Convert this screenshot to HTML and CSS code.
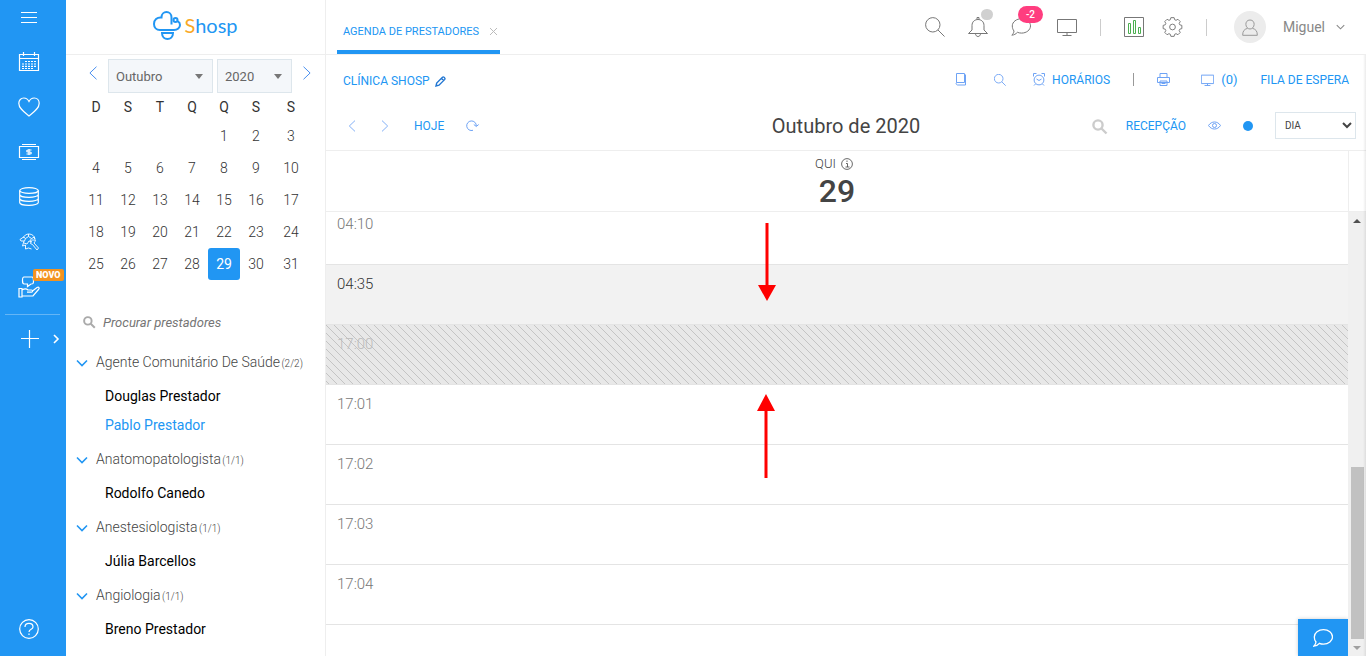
FILE: index.html
```
<!DOCTYPE html>
<html lang="pt-BR">
<head>
  <meta charset="UTF-8">
  <title>Agenda de Prestadores - Shosp</title>
  <link rel="stylesheet" href="styles.css">
</head>
<body>
  <svg class="sprite" aria-hidden="true">
    <symbol id="i-search" viewBox="0 0 20 20"><circle cx="7.800" cy="7.800" r="7.200"/><path d="M13 13l6.500 6.500"/></symbol>
    <symbol id="i-search-bold" viewBox="0 0 16 16"><circle cx="6" cy="6" r="4.600"/><path d="M9.500 9.500l5 5"/></symbol>
    <symbol id="i-monitor" viewBox="0 0 20 18"><path d="M.5 1.500h19v13H.5zM10 14.500v3M5.500 17.500h9"/></symbol>
    <symbol id="i-chat" viewBox="0 0 20 18"><path d="M10.500.7c5 0 9 3.200 9 7.200s-4 7.200-9 7.200c-1.500 0-2.900-.3-4.100-.8C5 16 3 17 .8 17.200c1.300-1.200 2-2.500 2.200-4.200C1.900 11.700 1.300 9.900 1.300 7.900c0-4 4.200-7.200 9.200-7.200z"/></symbol>
    <symbol id="i-left" viewBox="0 0 8 14"><path d="M7.500.7L.9 7l6.600 6.300"/></symbol>
    <symbol id="i-right" viewBox="0 0 8 14"><path d="M.5.7L7.100 7 .5 13.300"/></symbol>
    <symbol id="i-down" viewBox="0 0 12 8"><path d="M1 1.500l5 5 5-5"/></symbol>
  </svg>

  <div class="app">
    <nav class="sidebar" aria-label="Menu principal">
      <button class="menu" aria-label="Menu"><svg class="icon" width="18" height="12"><path d="M1 1.500h16M1 6.500h16M1 11.500h16"/></svg></button>
      <a href="#" aria-label="Agenda"><svg class="icon" width="22" height="20" viewBox="0 0 22 20"><path d="M1.500 2.500h19v16h-19zM1.500 6.500h19M5.500 0v4M16.500 0v4"/><path stroke-dasharray="2 1" d="M7 9.500h12M4 12h15M4 14.300h15M4 16.500h12"/></svg></a>
      <a href="#" aria-label="Saúde"><svg class="icon" width="22" height="20" viewBox="0 0 22 20"><path d="M11 19C6 15 .8 11.500.8 6.300.8 3.200 3 1 5.800 1 8.200 1 10 2.500 11 4.500 12 2.500 13.800 1 16.200 1 19 1 21.200 3.200 21.200 6.300 21.200 11.500 16 15 11 19z"/></svg></a>
      <a href="#" aria-label="Financeiro"><svg class="icon" width="20" height="16" viewBox="0 0 20 16"><path d="M3 .5h14M3 15.500h14M.5 2.500h19v11H.5z"/><path d="M12.500 6H9c-1.700 0-1.700 2 0 2h2c1.700 0 1.700 2 0 2H7.500M10 5v6"/></svg></a>
      <a href="#" aria-label="Estoque"><svg class="icon" width="20" height="19" viewBox="0 0 20 19"><ellipse cx="10" cy="3.500" rx="9.300" ry="2.900"/><path d="M.7 3.500v12c0 1.600 4.200 2.900 9.300 2.900s9.300-1.300 9.300-2.900v-12M.7 7.500c0 1.600 4.200 2.900 9.300 2.900s9.300-1.300 9.300-2.900M.7 11.500c0 1.600 4.200 2.900 9.300 2.900s9.300-1.300 9.300-2.900"/></svg></a>
      <a href="#" aria-label="Marketing"><svg class="icon fine" width="20" height="18" viewBox="0 0 20 18"><path d="M4.500 5C5 2.500 7 1 10 1s5.500 2 6 5M1 6.500L4.500 4l2 1.500-1 2.500H2zM6.500 5.500l3-2 3 2 3-1.500M5 8L3.500 13l3-1v4l3-1 3 1M5 10l3 1 2-3 3 1M9.500 3.500V1M12.500 5.500L11 8M12 8.500l2-2 2 2-1 1.500 4.500 5-1.500 2-4.500-5.500-2-1zM15 4l1.500 4"/></svg></a>
      <a href="#" class="new" aria-label="Atendimento"><svg class="icon" width="22" height="22" viewBox="0 0 22 22"><path d="M6 1h8c1.500 0 1.500 1 1.500 3.500S15.500 8 13 8l-3.500 2.500V8H6.500C4.500 8 4.500 6.500 4.500 4.500S4.500 1 6 1zM1 12.500h3v8.500H1zM4 14c2.500-1.500 4.500-1.500 6 0h3.500c1.500 0 1.500 2 0 2.200H9M14.500 15l4.500-3.500c1.700-1 3 .5 1.500 2L15 20H4"/></svg><span class="tag">NOVO</span></a>
      <button class="add" aria-label="Adicionar"><svg class="icon" width="20" height="20"><path d="M9.500 1v18M1 9.500h18"/></svg><svg class="icon more" width="6" height="10"><path d="M1 1l4 4-4 4"/></svg></button>
      <a href="#" class="help" aria-label="Ajuda"><svg class="icon" width="20" height="20"><circle cx="10" cy="10" r="9.300"/><path d="M6 8c0-4.800 8-4.800 8 0 0 2.500-4 2.200-4 5M10 14.500V16"/></svg></a>
    </nav>

    <aside class="panel">
      <a href="#" class="logo">
        <svg width="28" height="29" viewBox="0 0 28 29"><path d="M18.500 13.500V6.500C18.500-.7 8.500-.7 8.500 6.500 4 6 1 9 1 13c0 3.500 2.500 6 6 6h14c3.500 0 6-2.500 6-5 0-1.800-.8-3-2.200-3.700"/><circle cx="22.500" cy="9" r="2"/><path d="M9 22c0 8 11 8 11 0z"/></svg>
        <span><b>S</b>hosp</span>
      </a>

      <div class="month">
        <button aria-label="Mês anterior"><svg class="icon" width="8" height="14"><use href="#i-left"/></svg></button>
        <span class="picker picker-month"><select aria-label="Mês"><option>Outubro</option></select></span>
        <span class="picker"><select aria-label="Ano"><option>2020</option></select></span>
        <button aria-label="Próximo mês"><svg class="icon" width="8" height="14"><use href="#i-right"/></svg></button>
      </div>

      <table class="calendar">
        <thead>
          <tr><th>D</th><th>S</th><th>T</th><th>Q</th><th>Q</th><th>S</th><th>S</th></tr>
        </thead>
        <tbody>
          <tr><td></td><td></td><td></td><td></td><td>1</td><td>2</td><td>3</td></tr>
          <tr><td>4</td><td>5</td><td>6</td><td>7</td><td>8</td><td>9</td><td>10</td></tr>
          <tr><td>11</td><td>12</td><td>13</td><td>14</td><td>15</td><td>16</td><td>17</td></tr>
          <tr><td>18</td><td>19</td><td>20</td><td>21</td><td>22</td><td>23</td><td>24</td></tr>
          <tr><td>25</td><td>26</td><td>27</td><td>28</td><td class="selected">29</td><td>30</td><td>31</td></tr>
        </tbody>
      </table>

      <label class="search">
        <svg class="icon" width="13" height="13"><use href="#i-search-bold"/></svg>
        <input type="text" placeholder="Procurar prestadores" aria-label="Procurar prestadores">
      </label>

      <div class="providers">
        <section>
          <h3><svg class="icon" width="12" height="8"><use href="#i-down"/></svg><span>Agente Comunitário De Saúde <small>(2/2)</small></span></h3>
          <a href="#">Douglas Prestador</a>
          <a href="#" class="active">Pablo Prestador</a>
        </section>
        <section>
          <h3><svg class="icon" width="12" height="8"><use href="#i-down"/></svg><span>Anatomopatologista <small>(1/1)</small></span></h3>
          <a href="#">Rodolfo Canedo</a>
        </section>
        <section>
          <h3><svg class="icon" width="12" height="8"><use href="#i-down"/></svg><span>Anestesiologista <small>(1/1)</small></span></h3>
          <a href="#">Júlia Barcellos</a>
        </section>
        <section>
          <h3><svg class="icon" width="12" height="8"><use href="#i-down"/></svg><span>Angiologia <small>(1/1)</small></span></h3>
          <a href="#">Breno Prestador</a>
        </section>
      </div>
    </aside>

    <div class="main">
      <header class="topbar">
        <div class="tab">
          <a href="#">AGENDA DE PRESTADORES</a>
          <button aria-label="Fechar aba"><svg class="icon" width="7" height="7"><path d="M0 0l7 7M7 0L0 7"/></svg></button>
        </div>
        <div class="tools">
          <div class="alerts">
            <button aria-label="Buscar"><svg class="icon" width="20" height="20"><use href="#i-search"/></svg></button>
            <button aria-label="Notificações"><svg class="icon" width="22" height="20" viewBox="0 0 22 20"><path d="M5 13V8.500c0-8 12-8 12 0V13l3.500 3.500h-19zM10 2.500V.5h2v2M8.500 16.500c0 4 5 4 5 0"/></svg><span class="dot"></span></button>
            <button aria-label="Mensagens"><svg class="icon" width="20" height="18"><use href="#i-chat"/></svg><span class="count">-2</span></button>
          </div>
          <button aria-label="Tela"><svg class="icon" width="20" height="18"><use href="#i-monitor"/></svg></button>
          <span class="bar"></span>
          <div class="settings">
            <button aria-label="Relatórios"><svg class="icon" width="20" height="20"><path stroke="#777" d="M.5.5h19v19H.5z"/><path stroke="#4caf50" d="M4.500 6.500h2v10h-2zM9.500 3.500h2v13h-2zM14.500 10.500h2v6h-2z"/></svg></button>
            <button aria-label="Configurações"><svg class="icon" width="21" height="22" viewBox="-11 -11 22 22"><path d="M-2.300-7.600L-1.700-9.800H1.700L2.300-7.600 3.700-7 5.700-8.100 8.100-5.700 7-3.700 7.600-2.300 9.800-1.700V1.700L7.600 2.300 7 3.700 8.100 5.700 5.700 8.100 3.700 7 2.300 7.600 1.700 9.800H-1.700L-2.300 7.600-3.700 7-5.700 8.100-8.100 5.700-7 3.700-7.600 2.300-9.800 1.700V-1.700L-7.600-2.300-7-3.700-8.100-5.700-5.700-8.100-3.700-7z"/><circle r="3"/></svg></button>
          </div>
          <span class="bar"></span>
          <button class="user">
            <span class="avatar"><svg class="icon" width="16" height="17" viewBox="0 0 16 17"><path d="M8 1c6 0 5 9 0 9S2 1 8 1zM5.500 9.300C2 10.500.7 12 .7 16.300h14.600c0-4.300-1.300-5.800-4.800-7"/></svg></span>
            <span>Miguel</span>
            <svg class="icon" width="9" height="6"><use href="#i-down"/></svg>
          </button>
        </div>
      </header>

      <div class="toolbar">
        <button class="clinic">CLÍNICA SHOSP <svg class="icon" width="11" height="11" viewBox="0 0 11 11"><path d="M1 10l.7-3L7.500 1.200c1-1 3.200 1 2.300 2.200L4 9.200zM6.500 2.500L8.700 4.600"/></svg></button>
        <div class="actions">
          <button aria-label="Prontuário"><svg class="icon" width="12" height="13"><path d="M1.500 9.500v-9h8v9zM1.500 9.500c-1 1 0 2.500 1 2.500h8V1.500"/></svg></button>
          <button class="find" aria-label="Localizar"><svg class="icon" width="12" height="12"><use href="#i-search"/></svg></button>
          <button><svg class="icon" width="12" height="13"><circle cx="6" cy="7" r="4.900"/><path d="M3.500 6L6 7.500 8.500 6M.5 3.500v-3h3M8.500.5h3v3M2.500 11L1 12.500M9.500 11l1.500 1.500"/></svg> HORÁRIOS</button>
          <span class="bar"></span>
          <button class="print" aria-label="Imprimir"><svg class="icon" width="13" height="13"><path d="M3 4V.5h7V4M.5 4.500h12v5H.5zM3 8h7v4.500H3zM4.500 10.500h4"/></svg></button>
          <button class="queue"><svg class="icon" width="13" height="12"><use href="#i-monitor"/></svg> <span>(0)</span></button>
          <button>FILA DE ESPERA</button>
        </div>
      </div>

      <div class="datebar">
        <div class="nav">
          <button aria-label="Anterior"><svg class="icon" width="8" height="12"><use href="#i-left"/></svg></button>
          <button aria-label="Próximo"><svg class="icon" width="8" height="12"><use href="#i-right"/></svg></button>
          <button>HOJE</button>
          <button class="reload" aria-label="Atualizar"><svg class="icon" width="13" height="11"><path d="M7 10.300A4.800 4.800 0 1 1 10.300 6M7.800 4.500l2.500 2L12.700 4.500"/></svg></button>
        </div>
        <h2>Outubro de 2020</h2>
        <div class="view">
          <div class="reception">
            <svg class="icon" width="16" height="16"><use href="#i-search-bold"/></svg>
            <button>RECEPÇÃO</button>
          </div>
          <button aria-label="Visualizar"><svg class="icon" width="13" height="9"><path d="M.5 4.500c3-4.700 9-4.700 12 0-3 4.700-9 4.700-12 0z"/><circle cx="6.500" cy="4.500" r="2"/></svg></button>
          <span class="status"></span>
          <select aria-label="Visualização"><option>DIA</option></select>
        </div>
      </div>

      <div class="dayhead">
        <div class="day">
          <span>QUI <svg class="icon" width="12" height="12"><circle cx="6" cy="6" r="5.400"/><path d="M5 5.500h1.500V9M4.500 9h4M6 2.500v1.500"/></svg></span>
          <strong>29</strong>
        </div>
      </div>

      <div class="agenda">
        <div class="view-port">
          <ol class="slots">
            <li>04:10</li>
            <li class="off">04:35</li>
            <li class="blocked">17:00</li>
            <li>17:01</li>
            <li>17:02</li>
            <li>17:03</li>
            <li>17:04</li>
          </ol>
          <svg class="arrows" width="20" height="256" aria-hidden="true">
            <path d="M9.500 0h3v62h7.500l-9 16-9-16h7.500z"/>
            <path d="M8.500 255V188H1l9-17 9 17h-7.500v67z"/>
          </svg>
          <button class="chat" aria-label="Chat"><svg class="icon" width="20" height="18"><use href="#i-chat"/></svg></button>
        </div>
        <div class="scroll" aria-hidden="true">
          <i class="up"></i>
          <div class="track"><div class="thumb"></div></div>
          <i class="down"></i>
        </div>
      </div>
    </div>
  </div>
</body>
</html>
```

FILE: styles.css
```
* { box-sizing: border-box; }
body { margin: 0; font-family: Roboto, sans-serif; font-size: 14px; color: #444; background: #fff; }
button { padding: 0; border: 0; background: none; font: inherit; color: inherit; cursor: pointer; }
a { color: inherit; text-decoration: none; }
.sprite { display: none; }
.icon { display: block; flex: none; overflow: visible; fill: none; stroke: currentColor; stroke-width: 1; }

.app { display: grid; grid-template-columns: 66px 260px 1fr; height: 100vh; overflow: hidden; }

/* menu lateral */
.sidebar { display: flex; flex-direction: column; padding-right: 1px; background: #2196f3; color: #fff; }
.sidebar a, .sidebar button { display: flex; flex: none; align-items: center; justify-content: center; height: 45px; padding-right: 7px; }
.sidebar .icon { stroke-width: 1.2; }
.sidebar .fine { stroke-width: .9; }
.sidebar .menu { height: 39px; padding-bottom: 5px; }
.new { position: relative; }
.tag { position: absolute; top: 5px; left: 33px; padding: 0 3px; border-radius: 2px; background: #f39320; font-size: 9px; font-weight: 900; line-height: 12px; }
.sidebar .add { position: relative; height: 49px; margin: 5px 5px 0; padding-right: 6px; border-top: 1px solid #64b5f6; }
.sidebar .more { position: absolute; right: 1px; stroke-width: 1.6; }
.sidebar .help { height: 54px; margin-top: auto; }

/* painel de prestadores */
.panel { border-right: 1px solid #eee; overflow: hidden; }
.logo { display: flex; justify-content: center; gap: 3px; height: 55px; padding: 11px 0 0 0; border-bottom: 1px solid #eee; color: #2196f3; font: 20px/28px Lato, sans-serif; }
.logo svg { fill: none; stroke: #2196f3; stroke-width: 2; }
.logo b { font-weight: 400; color: #f9a825; }
.month { display: flex; gap: 4px; padding: 4px 0 0 23px; color: #4a90f0; }
.month button { height: 28px; }
.month button:first-child { margin-right: 7px; }
.month button:last-child { margin-left: 7px; }
.picker { position: relative; width: 75px; }
.picker-month { width: 105px; }
.picker select { width: 100%; height: 34px; padding: 0 7px; border: 1px solid #dde6ec; border-radius: 0; background: #f4f7fa; color: #666; font: 13px Roboto, sans-serif; appearance: none; }
.picker::after { content: ""; position: absolute; top: 15px; right: 10px; border: 4px solid transparent; border-top: 5px solid #777; border-bottom: 0; }
.calendar { margin: 1px 0 0 14px; border-collapse: collapse; table-layout: fixed; }
.calendar th { height: 26px; padding: 0; font-weight: 400; color: #333; }
.calendar td { width: 32px; height: 32px; padding: 0; text-align: center; font-weight: 300; color: #333; }
.calendar th:last-child, .calendar td:last-child { width: 38px; }
.calendar .selected { border-radius: 3px; background: #2196f3; color: #fff; font-weight: 400; }
.search { display: flex; align-items: center; gap: 7px; height: 20px; margin: 32px 0 11px 17px; color: #aaa; }
.search .icon { stroke-width: 2.4; }
.search input { width: 180px; padding: 0; border: 0; outline: 0; font: italic 13px Roboto, sans-serif; }
.search input::placeholder { color: #757575; }
.providers h3 { display: flex; align-items: center; gap: 8px; height: 39px; margin: 0; padding: 0 0 2px 10px; font-size: 14px; font-weight: 300; }
.providers h3 .icon { margin-top: 3px; color: #2196f3; stroke-width: 1.6; }
.providers small { margin-left: -2px; font-size: 10px; }
.providers a { display: block; padding-left: 39px; line-height: 29px; color: #000; }
.providers .active { color: #2196f3; }

/* cabeçalho */
.main { position: relative; display: flex; flex-direction: column; min-width: 0; min-height: 0; }
.main::after { content: ""; position: absolute; top: 55px; right: 0; bottom: 0; width: 3px; background: linear-gradient(to right, transparent, rgba(0, 0, 0, .08)); }
.topbar { display: flex; flex: none; justify-content: space-between; height: 55px; padding: 0 21px 0 11px; border-bottom: 1px solid #eee; color: #777; }
.tab { display: flex; align-items: center; gap: 11px; height: 54px; padding: 12px 3px 0 6px; border-bottom: 4px solid #2196f3; color: #2196f3; font-size: 11px; }
.tab button { color: #bbb; }
.tools { display: flex; align-items: center; gap: 23px; }
.alerts { display: flex; gap: 22px; margin-right: 3px; }
.alerts button { position: relative; }
.dot { position: absolute; top: -8px; right: -4px; width: 12px; height: 11px; border-radius: 6px; background: #d0d0d0; }
.count { position: absolute; top: -11px; left: 7px; width: 25px; border-radius: 9px; background: #ff3d7f; color: #fff; font-size: 10px; font-weight: 500; line-height: 17px; }
.settings { display: flex; align-items: center; gap: 18px; }
.bar { width: 1px; height: 17px; background: #ccc; }
.user { display: flex; align-items: center; gap: 11px; margin-left: 4px; color: #888; }
.user .icon { stroke-width: 1.4; }
.avatar { display: grid; place-items: center; width: 32px; height: 32px; margin-right: 6px; border-radius: 50%; background: #ececec; color: #999; }
.user .avatar .icon { stroke-width: 1; }

.toolbar { display: flex; flex: none; align-items: center; justify-content: space-between; height: 48px; padding: 1px 17px 0; color: #2196f3; font-size: 12px; }
.toolbar button { display: flex; align-items: center; gap: 7px; }
.toolbar .icon, .datebar button .icon { stroke: #6ea3f5; }
.toolbar .clinic { gap: 5px; padding-top: 3px; }
.toolbar .clinic .icon { stroke: #2176d2; stroke-width: 1.4; }
.actions { display: flex; align-items: center; gap: 23px; }
.toolbar .find { margin: 0 4px; }
.toolbar .find .icon, .toolbar .queue .icon { stroke-width: 1.5; }
.toolbar .print { margin-right: 8px; }
.actions .bar { height: 13px; background: #999; }
.queue span { font-size: 13px; }

.datebar { display: grid; grid-template-columns: 1fr auto 1fr; flex: none; align-items: center; height: 48px; padding: 0 10px 2px 22px; border-bottom: 1px solid #eee; color: #2196f3; font-size: 12px; }
.nav { display: flex; align-items: center; gap: 25px; }
.nav .reload { margin-left: -3px; }
.datebar h2 { margin: 0; padding-right: 12px; color: #444; font-size: 20px; font-weight: 400; }
.view, .reception { display: flex; align-items: center; justify-content: flex-end; gap: 22px; }
.reception { gap: 18px; }
.reception .icon { margin-top: 3px; color: #ccc; stroke-width: 2.4; }
.status { width: 10px; height: 10px; border-radius: 50%; background: #2196f3; }
.view select { width: 81px; height: 27px; padding: 0 5px; border: 1px solid #dde6ec; background: #fff; color: #444; font: 10px Roboto, sans-serif; }

/* agenda */
.dayhead { flex: none; height: 61px; padding-right: 17px; border-bottom: 1px solid #eee; }
.day { display: flex; flex-direction: column; align-items: center; height: 60px; padding-top: 5px; border-right: 1px solid #eee; }
.day span { display: flex; align-items: center; gap: 5px; margin-right: 6px; font-size: 13px; font-weight: 300; line-height: 16px; }
.day .icon { stroke-width: .8; }
.day strong { font-size: 32px; font-weight: 500; line-height: 38px; }
.agenda { display: flex; flex: 1; min-height: 0; }
.view-port { position: relative; flex: 1; overflow: hidden; }
.slots { margin: -7px 0 0; padding: 0; list-style: none; }
.slots li { height: 60px; padding: 9px 11px; border-bottom: 1px solid #e4e4e4; color: #777; font-size: 15px; font-weight: 300; line-height: 20px; }
.slots .off { background: #f2f2f2; color: #333; }
.slots .blocked { background: #e8e8e8 linear-gradient(45deg, transparent 46%, #c4c4c4 46%, #c4c4c4 54%, transparent 54%) 0 0 / 8px 8px; color: #bbb; }
.arrows { position: absolute; top: 11px; left: 430px; fill: #f00; }
.chat { position: absolute; right: 0; bottom: 0; display: grid; place-items: center; width: 50px; height: 37px; background: #2196f3; color: #fff; box-shadow: 0 0 4px rgba(0, 0, 0, .2); }
.chat .icon { stroke-width: 1.3; }
.scroll { display: flex; flex-direction: column; align-items: center; flex: none; width: 18px; padding: 7px 0 6px; background: #f0f0f0; }
.scroll .up { border: 4px solid transparent; border-bottom-color: #505050; border-top: 0; }
.scroll .down { border: 4px solid transparent; border-top-color: #a0a0a0; border-bottom: 0; }
.track { display: flex; flex-direction: column; justify-content: flex-end; flex: 1; padding: 6px 0 7px; }
.thumb { width: 13px; height: 42%; background: #c1c1c1; }
```
